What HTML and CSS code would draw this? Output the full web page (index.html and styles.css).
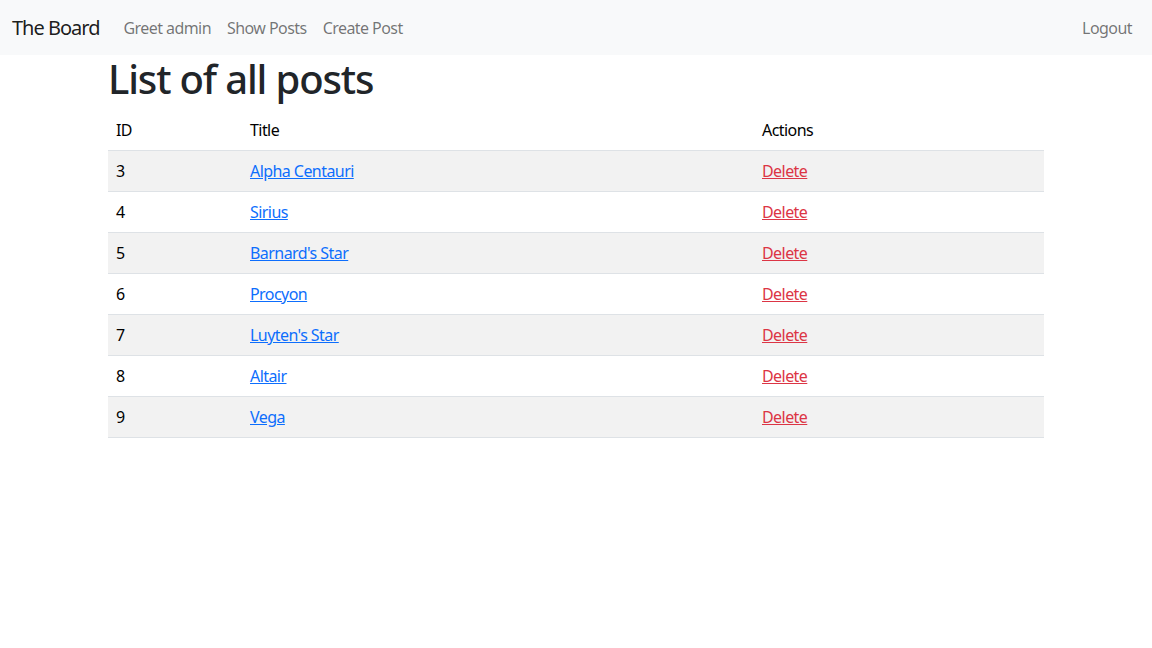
FILE: index.html
```html
<!DOCTYPE html>
<html lang="en">
<head>
<meta charset="utf-8">
<title>The Board</title>
<link rel="stylesheet" href="styles.css">
</head>
<body>
<nav class="navbar">
  <div class="nav-inner">
    <a class="brand" href="#">The Board</a>
    <ul class="nav-links">
      <li><a class="nav-link" href="#">Greet admin</a></li>
      <li><a class="nav-link" href="#">Show Posts</a></li>
      <li><a class="nav-link" href="#">Create Post</a></li>
    </ul>
    <ul class="nav-links nav-right">
      <li><a class="nav-link" href="#">Logout</a></li>
    </ul>
  </div>
</nav>
<main class="container">
  <h1 class="title">List of all posts</h1>
  <table class="table">
    <thead>
      <tr><th class="col-id">ID</th><th class="col-title">Title</th><th class="col-actions">Actions</th></tr>
    </thead>
    <tbody>
      <tr><td>3</td><td><a class="link" href="#">Alpha Centauri</a></td><td><a class="danger" href="#">Delete</a></td></tr>
      <tr><td>4</td><td><a class="link" href="#">Sirius</a></td><td><a class="danger" href="#">Delete</a></td></tr>
      <tr><td>5</td><td><a class="link" href="#">Barnard's Star</a></td><td><a class="danger" href="#">Delete</a></td></tr>
      <tr><td>6</td><td><a class="link" href="#">Procyon</a></td><td><a class="danger" href="#">Delete</a></td></tr>
      <tr><td>7</td><td><a class="link" href="#">Luyten's Star</a></td><td><a class="danger" href="#">Delete</a></td></tr>
      <tr><td>8</td><td><a class="link" href="#">Altair</a></td><td><a class="danger" href="#">Delete</a></td></tr>
      <tr><td>9</td><td><a class="link" href="#">Vega</a></td><td><a class="danger" href="#">Delete</a></td></tr>
    </tbody>
  </table>
</main>
</body>
</html>
```
FILE: styles.css
```css
* { box-sizing: border-box; }
html, body { margin: 0; padding: 0; }
body {
  font-family: "Noto Sans", "Open Sans", sans-serif;
  font-size: 16px;
  line-height: 1.5;
  letter-spacing: -0.56px;
  color: #212529;
  background: #fff;
}
.navbar {
  background: #f8f9fa;
  height: 55px;
}
.nav-inner {
  height: 100%;
  display: flex;
  align-items: center;
  padding: 0 12px;
}
.brand {
  font-size: 20px;
  letter-spacing: -1px;
  color: rgba(0,0,0,.9);
  text-decoration: none;
  margin-right: 16px;
  line-height: 30px;
}
.nav-links {
  list-style: none;
  margin: 0;
  padding: 0;
  display: flex;
}
.nav-right { margin-left: auto; }
.nav-link {
  display: block;
  padding: 8px;
  color: rgba(0,0,0,.55);
  text-decoration: none;
}
.container {
  width: 960px;
  margin: 0 auto;
  padding: 0 12px;
}
.title {
  font-size: 40px;
  font-weight: 500;
  letter-spacing: -1.15px;
  line-height: 1.2;
  margin: 0 0 7px;
  color: #212529;
}
.table {
  width: 100%;
  border-collapse: collapse;
  color: #000;
}
.table th, .table td {
  text-align: left;
  font-weight: 400;
  padding: 8px;
  border-bottom: 1px solid #dee2e6;
  vertical-align: top;
}
.table tbody tr:nth-child(odd) { background: #f2f2f2; }
.col-id { width: 134px; }
.col-title { width: 512px; }
.link { color: #0d6efd; }
.danger { color: #dc3545; }
```
